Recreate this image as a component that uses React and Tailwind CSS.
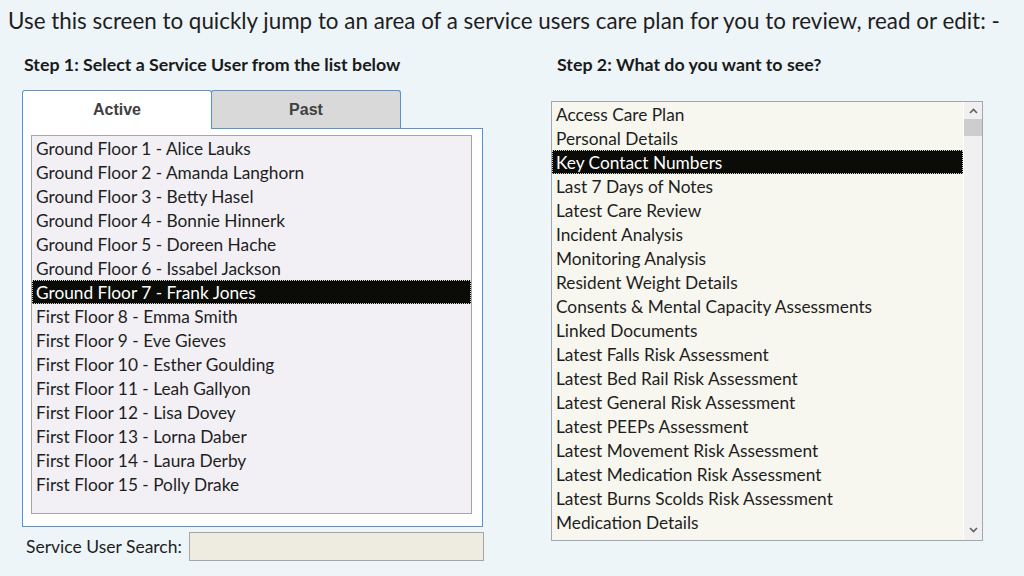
import React from "react";

const users = [
  "Ground Floor 1 - Alice Lauks",
  "Ground Floor 2 - Amanda Langhorn",
  "Ground Floor 3 - Betty Hasel",
  "Ground Floor 4 - Bonnie Hinnerk",
  "Ground Floor 5 - Doreen Hache",
  "Ground Floor 6 - Issabel Jackson",
  "Ground Floor 7 - Frank Jones",
  "First Floor 8 - Emma Smith",
  "First Floor 9 - Eve Gieves",
  "First Floor 10 - Esther Goulding",
  "First Floor 11 - Leah Gallyon",
  "First Floor 12 - Lisa Dovey",
  "First Floor 13 - Lorna Daber",
  "First Floor 14 - Laura Derby",
  "First Floor 15 - Polly Drake",
];

const options = [
  "Access Care Plan",
  "Personal Details",
  "Key Contact Numbers",
  "Last 7 Days of Notes",
  "Latest Care Review",
  "Incident Analysis",
  "Monitoring Analysis",
  "Resident Weight Details",
  "Consents & Mental Capacity Assessments",
  "Linked Documents",
  "Latest Falls Risk Assessment",
  "Latest Bed Rail Risk Assessment",
  "Latest General Risk Assessment",
  "Latest PEEPs Assessment",
  "Latest Movement Risk Assessment",
  "Latest Medication Risk Assessment",
  "Latest Burns Scolds Risk Assessment",
  "Medication Details",
];

function Row({ text, selected }) {
  return (
    <div
      className={
        "h-[24px] pl-[3px] leading-[23px] whitespace-nowrap border " +
        (selected
          ? "bg-[#0b0c08] text-white border-dotted border-white/80"
          : "border-transparent text-[#1e1e1e]")
      }
    >
      {text}
    </div>
  );
}

export default function App() {
  return (
    <div
      className="w-[1024px] h-[576px] overflow-hidden bg-[#edf5f9] text-[#1e1e1e]"
      style={{ fontFamily: "Lato, 'Open Sans', sans-serif" }}
    >
      <div className="h-[44px] pl-[8px] pt-[7px] text-[22.4px] leading-[28px] whitespace-nowrap">
        Use this screen to quickly jump to an area of a service users care plan for you to review, read or edit: -
      </div>
      <div className="flex">
        {/* Left column */}
        <div className="ml-[22px] w-[462px] flex flex-col">
          <div className="mt-[10px] h-[20px] pl-[2px] text-[17.8px] leading-[20px] font-bold text-[#1a1a1a] whitespace-nowrap">
            Step 1: Select a Service User from the list below
          </div>
          <div className="mt-[16px] flex h-[38px]">
            <div
              className="relative z-10 h-[39px] -mb-px w-[190px] bg-white border-l border-t border-r border-[#5592d8] rounded-t-[3px] flex items-center justify-center text-[16px] font-bold text-[#404040]"
              style={{ fontFamily: "'Liberation Sans', Arial, sans-serif" }}
            >
              Active
            </div>
            <div
              className="-ml-px h-[38px] w-[190px] bg-[#d9d9d9] border-l border-t border-r border-[#5592d8] rounded-t-[3px] flex items-center justify-center text-[16px] font-bold text-[#404040]"
              style={{ fontFamily: "'Liberation Sans', Arial, sans-serif" }}
            >
              Past
            </div>
          </div>
          <div className="w-[461px] h-[399px] bg-white border border-[#5592d8] pl-[8px] pt-[6px]">
            <div className="w-[441px] h-[379px] bg-[#f2f0f5] border border-[#a6a6a6] text-[17.3px]">
              {users.map((u, i) => (
                <Row key={u} text={u} selected={i === 6} />
              ))}
            </div>
          </div>
          <div className="mt-[5px] flex items-center">
            <div className="pl-[4px] w-[167px] text-[17.5px] leading-[20px] whitespace-nowrap">
              Service User Search:
            </div>
            <div className="w-[296px] h-[29px] bg-[#eeebe0] border border-[#a6a6a6]" />
          </div>
        </div>

        {/* Right column */}
        <div className="ml-[67px] w-[432px] flex flex-col">
          <div className="mt-[10px] h-[20px] pl-[6px] text-[17.8px] leading-[20px] font-bold text-[#1a1a1a] whitespace-nowrap">
            Step 2: What do you want to see?
          </div>
          <div className="mt-[27px] w-[432px] h-[440px] bg-[#f7f7ef] border border-[#a2a8ad] flex">
            <div className="w-[411px] text-[17.3px] overflow-hidden">
              {options.map((o, i) => (
                <Row key={o} text={o} selected={i === 2} />
              ))}
            </div>
            <div className="w-px bg-white" />
            <div className="w-[18px] bg-[#f0f0f0] flex flex-col">
              <div className="h-[17px] flex items-center justify-center">
                <svg width="9" height="6" viewBox="0 0 9 6">
                  <path d="M1 5 L4.5 1.5 L8 5" fill="none" stroke="#606060" strokeWidth="1.6" />
                </svg>
              </div>
              <div className="h-[17px] bg-[#cdcdcd]" />
              <div className="flex-1" />
              <div className="h-[20px] flex items-center justify-center">
                <svg width="9" height="6" viewBox="0 0 9 6">
                  <path d="M1 1 L4.5 4.5 L8 1" fill="none" stroke="#606060" strokeWidth="1.6" />
                </svg>
              </div>
            </div>
          </div>
        </div>
      </div>
    </div>
  );
}
